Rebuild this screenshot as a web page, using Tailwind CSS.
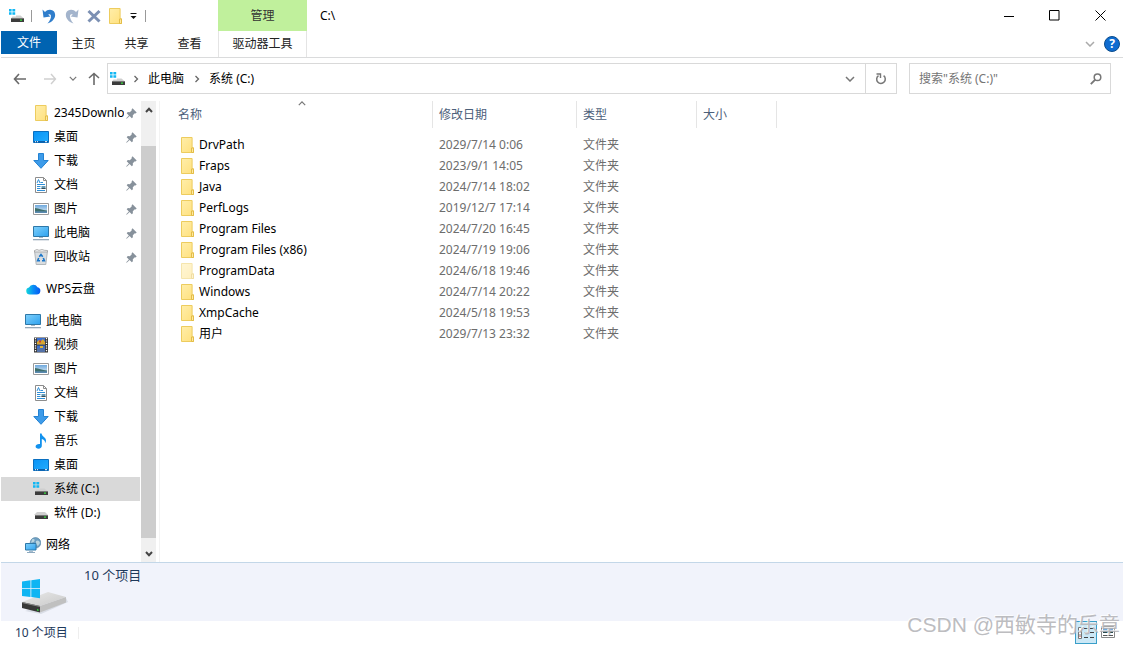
<!DOCTYPE html>
<html lang="zh-CN">
<head>
<meta charset="utf-8">
<title>C:\</title>
<script src="https://cdn.jsdelivr.net/npm/@tailwindcss/browser@4"></script>
</head>
<body class="relative flex min-h-screen flex-col bg-white px-px font-['Noto_Sans','Noto_Sans_CJK_SC',sans-serif] text-xs text-black">

<svg class="absolute size-0" aria-hidden="true">
  <defs>
    <linearGradient id="gFolder" x1="0" y1="0" x2="1" y2="1"><stop offset="0" stop-color="#ffeeaa"/><stop offset="1" stop-color="#ffe07c"/></linearGradient>
    <linearGradient id="gScreen" x1="0" y1="0" x2="1" y2="1"><stop offset="0" stop-color="#7fd0fb"/><stop offset="1" stop-color="#2ea2ef"/></linearGradient>
    <linearGradient id="gDesk" x1="0" y1="0" x2="1" y2="1"><stop offset="0" stop-color="#0a93f5"/><stop offset="1" stop-color="#22adff"/></linearGradient>
    <linearGradient id="gCloud" x1="0" y1="0" x2="1" y2="0"><stop offset="0" stop-color="#12d8dc"/><stop offset=".5" stop-color="#0a8cf5"/><stop offset="1" stop-color="#0659f2"/></linearGradient>
    <linearGradient id="gTop" x1="0" y1="0" x2="1" y2="1"><stop offset="0" stop-color="#e9e9e9"/><stop offset="1" stop-color="#c9c9c9"/></linearGradient>
    <linearGradient id="gSky" x1="0" y1="0" x2="0" y2="1"><stop offset="0" stop-color="#6fa8dc"/><stop offset="1" stop-color="#e2f0f7"/></linearGradient>
    <symbol id="folder" viewBox="0 0 13 16"><path d="M.5.5h10.600v10.300h1.400v4.700H.5z" fill="url(#gFolder)" stroke="#edcc5e"/><path d="M10.500 15.500v-4.500h2v4.500z" fill="#ffe9a0" stroke="#e3bd48"/></symbol>
    <symbol id="desktop" viewBox="0 0 16 16"><path d="M.5 2.500h15v11H.5z" fill="url(#gDesk)" stroke="#0a6fc0"/><path d="M1 12h14v1.500H1z" fill="#0b5ea8"/><path d="M2 12.700h1M4 12.700h1M12 12.700h2" stroke="#fff"/></symbol>
    <symbol id="download" viewBox="0 0 16 16"><path d="M5.500.5h5v7h4.700L8 15.300.8 7.500h4.700z" fill="#3d9be9" stroke="#2382d3"/></symbol>
    <symbol id="doc" viewBox="0 0 16 16"><path d="M2.500.5h8l3 3v12h-11z" fill="#fff" stroke="#8d8d8d"/><path d="M10.500.5v3h3" fill="none" stroke="#8d8d8d"/><path d="M4 6l1.500-3.500L7 6M7.500 5.500H10M4 7.500h8M4 9.500h3.500M4 11.500h3.500M4 13.500h8" fill="none" stroke="#2f8fd8"/><path d="M8.500 9h4v3h-4z" fill="#6499b5"/><path d="M8.500 11h4v1h-4z" fill="#3a4b53"/></symbol>
    <symbol id="picture" viewBox="0 0 16 16"><path d="M.5 2.500h15v11H.5z" fill="#fff" stroke="#9a9a9a"/><path d="M2 4h12v8H2z" fill="url(#gSky)"/><path d="M2 7c4 .5 7 2 12 2.500V12H2z" fill="#3f6f6c"/><path d="M2 10.300h12V12H2z" fill="#5a8ab0"/></symbol>
    <symbol id="pc" viewBox="0 0 16 16"><path d="M.5 1.500h15v10H.5z" fill="url(#gScreen)" stroke="#2e78a8"/><path d="M6 12h4v1H6z" fill="#a5b8c6"/><path d="M0 14h16v1.300H0z" fill="#96a9b9"/></symbol>
    <symbol id="bin" viewBox="0 0 16 16"><path d="M1.500 2h13l-1.700 13.500H3.200z" fill="#d9dde0" stroke="#a4a9ad" stroke-width=".8"/><path d="M1.500 1.500l2.500-1 2 .8L9 .5l2.500.8 3 .2v1.500h-13z" fill="#eef0f1" stroke="#999" stroke-width=".7"/><path d="M6.300 7.800L8 5.500l1.700 2.300M10.300 9l1.100 2.700H9M7 11.700H4.600L5.700 9" fill="none" stroke="#1a76c9" stroke-width="1.600"/></symbol>
    <symbol id="cloud" viewBox="0 0 16 16"><path d="M4.800 13.500a3.600 3.600 0 0 1-.8-7.100 4.800 4.800 0 0 1 8.500-.2 3.700 3.700 0 0 1-1 7.300z" fill="url(#gCloud)"/></symbol>
    <symbol id="video" viewBox="0 0 16 16"><path d="M1 .5h14v15H1z" fill="#333"/><path d="M4 1h8v6.500H4zM4 8.500h8V15H4z" fill="#3b6fd0"/><path d="M4 5l2-2 2 1 2-2 2 3v2.500H4z" fill="#d9a62e"/><path d="M6 3.500h2v2H6z" fill="#c9402f"/><path d="M4 12l3-1.500L9 12l3-2v5H4z" fill="#5472a8"/><path d="M7 9h3v2H7z" fill="#e1b638"/><path d="M2.500 1v14M13.500 1v14" stroke="#fff" stroke-width="1.300" stroke-dasharray="1.200 1.200"/></symbol>
    <symbol id="music" viewBox="0 0 16 16"><path d="M7 .5h1.600c.2 3 4.600 3.800 4.400 7.300-.1 1.200-.6 2-1 2.500.4-2.500-1.200-3.600-3.200-4.200v6.700c0 1.700-1.300 2.900-3.300 2.900-1.700 0-2.900-.8-2.900-2.200 0-1.700 2-2.800 4.400-2.400z" fill="#1292ee"/></symbol>
    <symbol id="drive" viewBox="0 0 16 16"><path d="M4 7h8l3 3H1z" fill="#cfcfcf"/><path d="M2 10h13v4H2z" fill="#3c3c3c"/><path d="M2 10h13v1H2z" fill="#777"/><path d="M11 11.500h2v1.300h-2z" fill="#36e03c"/></symbol>
    <symbol id="sysdrive" viewBox="0 0 16 16"><path d="M0 1h2.600v2.500H0zM3.400 1h2.800v2.500H3.400zM0 4.300h2.600v2.500H0zM3.400 4.300h2.800v2.500H3.400z" fill="#12b7f3"/><path d="M7 7.500h4.500l3.500 3H2L3.500 8.500h3.500z" fill="#cfcfcf"/><path d="M2 10h13v4H2z" fill="#3c3c3c"/><path d="M2 10h13v1H2z" fill="#777"/><path d="M11 11.500h2v1.300h-2z" fill="#36e03c"/></symbol>
    <symbol id="network" viewBox="0 0 16 16"><circle cx="10.500" cy="5.800" r="5.300" fill="#6d9fc3" stroke="#507f9f" stroke-width=".6"/><path d="M7 2.500c2-1 3 0 2.500 1.500S7 5 6 6zM11 4c2-1.500 3.500 0 4 2l-2 3-2-1.500z" fill="#b8d4df"/><path d="M.5 6.500h10.500v6.500H.5z" fill="url(#gScreen)" stroke="#2e78a8"/><path d="M4 14h4v.8H4zM2 15h8v1H2z" fill="#8da9bf"/></symbol>
    <symbol id="pin" viewBox="0 0 11 11"><path d="M6.500.3l4.200 4.200-1.200.9-.7-.2-2 2 .1 2-1.100 1.100-2.200-2.200L.7 10.800l-.5-.5 2.700-2.900L.7 5.200l1.100-1.100 2 .1 2-2-.2-.7z" fill="#87919b"/></symbol>
    <symbol id="chevR" viewBox="0 0 6 8"><path d="M1.500 1l3 3-3 3" fill="none" stroke="#666" stroke-width="1.300"/></symbol>
    <symbol id="chevD" viewBox="0 0 10 6"><path d="M1 1l4 4 4-4" fill="none" stroke="currentColor" stroke-width="1.500"/></symbol>
  </defs>
</svg>

<header>
  <div class="box-content flex h-[57px] items-start border-b border-[#dadbdc]">
    <div class="w-[217px]">
      <div class="flex h-[31px] items-center pl-2">
        <svg class="size-4"><use href="#sysdrive"/></svg>
        <span class="ml-1.5 h-3 w-px bg-[#999]"></span>
        <button class="ml-[9px] flex size-4" aria-label="撤消"><svg class="size-4" viewBox="0 0 16 16"><path d="M1.500 1.500l1 8 7-1-2.200-1.700C10 5 12 9 6.500 15.500 16.500 12 16 2 9 1.700 7 1.600 5.500 2.400 4 4z" fill="#2f7dcb"/></svg></button>
        <button class="ml-[7px] flex size-4" aria-label="恢复"><svg class="size-4" viewBox="0 0 16 16"><path d="M14.500 1.500l-1 8-7-1 2.200-1.700C6 5 4 9 9.500 15.500-.5 12 0 2 7 1.700c2-.1 3.500.7 5 2.300z" fill="#a3b4cc"/></svg></button>
        <button class="ml-1.5 flex size-4" aria-label="删除"><svg class="size-4" viewBox="0 0 16 16"><path d="M2.500 3l11 10.500M13.500 3l-11 10.500" stroke="#7c90b3" stroke-width="3"/></svg></button>
        <button class="ml-[7px] flex" aria-label="新建文件夹"><svg class="h-4 w-[13px]"><use href="#folder"/></svg></button>
        <button class="ml-2 flex" aria-label="自定义快速访问工具栏"><svg class="h-2 w-[7px]" viewBox="0 0 7 8"><path d="M.5 1.500h6" stroke="#111"/><path d="M.5 4h6l-3 3z" fill="#111"/></svg></button>
        <span class="ml-2 h-3 w-px bg-[#999]"></span>
      </div>
      <nav class="flex h-[23px] text-center text-[#222]">
        <button class="w-14 bg-[#0063b1] text-white">文件</button>
        <button class="w-[53px] pt-0.5">主页</button>
        <button class="w-[53px] pt-0.5">共享</button>
        <button class="w-[53px] pt-0.5">查看</button>
      </nav>
    </div>
    <div class="w-[89px]">
      <div class="flex h-[31px] items-center justify-center bg-[#c0f09c] text-[#333]">管理</div>
      <button class="block h-[26px] w-full border-x border-[#e4e4e4] pb-px text-[#222]">驱动器工具</button>
    </div>
    <h1 class="ml-[13px] flex h-8 flex-1 items-center">C:\</h1>
    <div>
      <div class="flex h-[31px]">
        <button class="flex w-[46px] items-center justify-center" aria-label="最小化"><svg class="size-2.5" viewBox="0 0 10 10"><path d="M0 5.500h10" stroke="#000"/></svg></button>
        <button class="flex w-[45px] items-center justify-center" aria-label="最大化"><svg class="size-[11px]" viewBox="0 0 11 11"><path d="M.5.5h9.500v9.500H.5z" fill="none" stroke="#000"/></svg></button>
        <button class="flex w-[46px] items-center justify-center" aria-label="关闭"><svg class="size-[11px]" viewBox="0 0 11 11"><path d="M.5.5l10 10M10.500.5l-10 10" stroke="#000"/></svg></button>
      </div>
      <div class="flex h-[26px] items-center justify-end gap-[9px] pr-[3px]">
        <button class="flex text-[#aaa]" aria-label="展开功能区"><svg class="h-1.5 w-2.5"><use href="#chevD"/></svg></button>
        <button class="flex size-4 items-center justify-center rounded-full border border-[#0b4c8c] bg-[#0f6cd0] text-xs font-bold text-white" aria-label="帮助">?</button>
      </div>
    </div>
  </div>

  <div class="flex items-center pt-[5px] pr-3">
    <div class="flex w-[106px] items-center pl-3">
      <button class="flex" aria-label="后退"><svg class="h-3 w-3.5" viewBox="0 0 14 12"><path d="M6 1L1.500 6 6 11M1.500 6H13" fill="none" stroke="#6a6a6a" stroke-width="1.600"/></svg></button>
      <button class="ml-4 flex" aria-label="前进"><svg class="h-3 w-3.5" viewBox="0 0 14 12"><path d="M8 1l4.500 5L8 11M12.500 6H1" fill="none" stroke="#cfcfcf" stroke-width="1.400"/></svg></button>
      <button class="ml-3 flex text-[#777]" aria-label="最近浏览的位置"><svg class="h-[5px] w-2" viewBox="0 0 10 6"><use href="#chevD"/></svg></button>
      <button class="ml-[11px] flex" aria-label="上移"><svg class="h-3.5 w-3" viewBox="0 0 12 14"><path d="M1 6l5-4.500L11 6M6 1.500V13" fill="none" stroke="#6a6a6a" stroke-width="1.600"/></svg></button>
    </div>
    <div class="flex h-[31px] flex-1 items-center border border-[#d9d9d9]">
      <svg class="ml-0.5 size-4"><use href="#sysdrive"/></svg>
      <svg class="ml-[7px] h-2 w-1.5"><use href="#chevR"/></svg>
      <a href="#" class="ml-[9px]">此电脑</a>
      <svg class="ml-2.5 h-2 w-1.5"><use href="#chevR"/></svg>
      <a href="#" class="ml-[9px] flex-1">系统 (C:)</a>
      <button class="mr-2.5 flex text-[#777]" aria-label="以前的位置"><svg class="h-1.5 w-2.5"><use href="#chevD"/></svg></button>
      <button class="flex h-full w-[31px] items-center justify-center border-l border-[#d9d9d9]" aria-label="刷新"><svg class="size-3" viewBox="0 0 12 12"><path d="M3.500 2.600A4.300 4.300 0 1 0 8.600 2.700" fill="none" stroke="#777" stroke-width="1.500"/><path d="M1.500 1h4v4" fill="none" stroke="#777" stroke-width="1.400"/></svg></button>
    </div>
    <label class="ml-3 flex h-[31px] w-[202px] items-center border border-[#d9d9d9] pr-2 pl-[9px]">
      <input type="search" aria-label="搜索" placeholder='搜索"系统 (C:)"' class="min-w-0 flex-1 outline-none placeholder:text-[#757575]">
      <svg class="size-3" viewBox="0 0 12 12"><circle cx="7.500" cy="4.300" r="3.300" fill="none" stroke="#777" stroke-width="1.500"/><path d="M5.200 6.700L.8 11.200" stroke="#777" stroke-width="1.900"/></svg>
    </label>
  </div>
</header>

<main class="flex flex-1 pt-[7px]">
  <nav class="w-[139px] pb-[5px]" aria-label="导航窗格">
    <ul>
      <li class="flex h-6 items-center pr-[3px] pl-[34px]"><svg class="mr-1.5 h-4 w-[13px] shrink-0"><use href="#folder"/></svg><a href="#" class="mr-0.5 min-w-0 flex-1 overflow-hidden whitespace-nowrap">2345Downloads</a><svg class="size-[11px] shrink-0"><use href="#pin"/></svg></li>
      <li class="flex h-6 items-center gap-[5px] pr-[3px] pl-8"><svg class="size-4"><use href="#desktop"/></svg><a href="#" class="flex-1">桌面</a><svg class="size-[11px]"><use href="#pin"/></svg></li>
      <li class="flex h-6 items-center gap-[5px] pr-[3px] pl-8"><svg class="size-4"><use href="#download"/></svg><a href="#" class="flex-1">下载</a><svg class="size-[11px]"><use href="#pin"/></svg></li>
      <li class="flex h-6 items-center gap-[5px] pr-[3px] pl-8"><svg class="size-4"><use href="#doc"/></svg><a href="#" class="flex-1">文档</a><svg class="size-[11px]"><use href="#pin"/></svg></li>
      <li class="flex h-6 items-center gap-[5px] pr-[3px] pl-8"><svg class="size-4"><use href="#picture"/></svg><a href="#" class="flex-1">图片</a><svg class="size-[11px]"><use href="#pin"/></svg></li>
      <li class="flex h-6 items-center gap-[5px] pr-[3px] pl-8"><svg class="size-4"><use href="#pc"/></svg><a href="#" class="flex-1">此电脑</a><svg class="size-[11px]"><use href="#pin"/></svg></li>
      <li class="flex h-6 items-center gap-[5px] pr-[3px] pl-8"><svg class="size-4"><use href="#bin"/></svg><a href="#" class="flex-1">回收站</a><svg class="size-[11px]"><use href="#pin"/></svg></li>
      <li class="mt-2 flex h-6 items-center gap-[5px] pl-6"><svg class="size-4"><use href="#cloud"/></svg><a href="#">WPS云盘</a></li>
      <li class="mt-2 flex h-6 items-center gap-[5px] pl-6"><svg class="size-4"><use href="#pc"/></svg><a href="#">此电脑</a></li>
      <li class="flex h-6 items-center gap-[5px] pl-8"><svg class="size-4"><use href="#video"/></svg><a href="#">视频</a></li>
      <li class="flex h-6 items-center gap-[5px] pl-8"><svg class="size-4"><use href="#picture"/></svg><a href="#">图片</a></li>
      <li class="flex h-6 items-center gap-[5px] pl-8"><svg class="size-4"><use href="#doc"/></svg><a href="#">文档</a></li>
      <li class="flex h-6 items-center gap-[5px] pl-8"><svg class="size-4"><use href="#download"/></svg><a href="#">下载</a></li>
      <li class="flex h-6 items-center gap-[5px] pl-8"><svg class="size-4"><use href="#music"/></svg><a href="#">音乐</a></li>
      <li class="flex h-6 items-center gap-[5px] pl-8"><svg class="size-4"><use href="#desktop"/></svg><a href="#">桌面</a></li>
      <li class="flex h-6 items-center gap-[5px] bg-[#d9d9d9] pl-8"><svg class="size-4"><use href="#sysdrive"/></svg><a href="#" aria-current="page">系统 (C:)</a></li>
      <li class="flex h-6 items-center gap-[5px] pl-8"><svg class="size-4"><use href="#drive"/></svg><a href="#">软件 (D:)</a></li>
      <li class="mt-2 flex h-6 items-center gap-[5px] pl-6"><svg class="size-4"><use href="#network"/></svg><a href="#">网络</a></li>
    </ul>
  </nav>
  <div class="ml-px flex w-[15px] flex-col bg-[#f0f0f0] text-[#444]">
    <button class="flex h-[17px] items-center justify-center" aria-label="向上滚动"><svg class="h-1.5 w-2 rotate-180" viewBox="0 0 8 6"><path d="M1 1l3 3.200L7 1" fill="none" stroke="currentColor" stroke-width="2"/></svg></button>
    <div class="mt-7 flex-1 bg-[#cdcdcd]"></div>
    <button class="mt-[7px] flex h-[17px] items-center justify-center" aria-label="向下滚动"><svg class="h-1.5 w-2" viewBox="0 0 8 6"><path d="M1 1l3 3.200L7 1" fill="none" stroke="currentColor" stroke-width="2"/></svg></button>
  </div>
  <div class="ml-[3px] flex-1 border-l border-[#f3f3f3] pl-3">
    <table class="w-[605px] table-fixed border-separate border-spacing-0 text-left text-[#6d6d6d]">
      <colgroup><col class="w-[261px]"><col class="w-36"><col class="w-30"><col class="w-20"></colgroup>
      <thead class="text-[#4c607a]">
        <tr>
          <th class="relative h-[27px] border-r border-[#e5e5e5] p-0 pl-1.5 font-normal">名称<svg class="absolute top-0 left-[126px] h-[5px] w-2 rotate-180 text-[#777]" viewBox="0 0 10 6"><use href="#chevD"/></svg></th>
          <th class="border-r border-[#e5e5e5] p-0 pl-1.5 font-normal">修改日期</th>
          <th class="border-r border-[#e5e5e5] p-0 pl-1.5 font-normal">类型</th>
          <th class="border-r border-[#e5e5e5] p-0 pl-1.5 font-normal">大小</th>
        </tr>
        <tr aria-hidden="true"><td class="h-1.5 p-0" colspan="4"></td></tr>
      </thead>
      <tbody>
        <tr><td class="h-[21px] p-0 pl-[9px] text-black"><div class="flex items-center gap-[5px]"><svg class="h-4 w-[13px]"><use href="#folder"/></svg>DrvPath</div></td><td class="p-0 pl-1.5">2029/7/14 0:06</td><td class="p-0 pl-1.5">文件夹</td><td></td></tr>
        <tr><td class="h-[21px] p-0 pl-[9px] text-black"><div class="flex items-center gap-[5px]"><svg class="h-4 w-[13px]"><use href="#folder"/></svg>Fraps</div></td><td class="p-0 pl-1.5">2023/9/1 14:05</td><td class="p-0 pl-1.5">文件夹</td><td></td></tr>
        <tr><td class="h-[21px] p-0 pl-[9px] text-black"><div class="flex items-center gap-[5px]"><svg class="h-4 w-[13px]"><use href="#folder"/></svg>Java</div></td><td class="p-0 pl-1.5">2024/7/14 18:02</td><td class="p-0 pl-1.5">文件夹</td><td></td></tr>
        <tr><td class="h-[21px] p-0 pl-[9px] text-black"><div class="flex items-center gap-[5px]"><svg class="h-4 w-[13px]"><use href="#folder"/></svg>PerfLogs</div></td><td class="p-0 pl-1.5">2019/12/7 17:14</td><td class="p-0 pl-1.5">文件夹</td><td></td></tr>
        <tr><td class="h-[21px] p-0 pl-[9px] text-black"><div class="flex items-center gap-[5px]"><svg class="h-4 w-[13px]"><use href="#folder"/></svg>Program Files</div></td><td class="p-0 pl-1.5">2024/7/20 16:45</td><td class="p-0 pl-1.5">文件夹</td><td></td></tr>
        <tr><td class="h-[21px] p-0 pl-[9px] text-black"><div class="flex items-center gap-[5px]"><svg class="h-4 w-[13px]"><use href="#folder"/></svg>Program Files (x86)</div></td><td class="p-0 pl-1.5">2024/7/19 19:06</td><td class="p-0 pl-1.5">文件夹</td><td></td></tr>
        <tr><td class="h-[21px] p-0 pl-[9px] text-black"><div class="flex items-center gap-[5px]"><svg class="h-4 w-[13px] opacity-50"><use href="#folder"/></svg>ProgramData</div></td><td class="p-0 pl-1.5">2024/6/18 19:46</td><td class="p-0 pl-1.5">文件夹</td><td></td></tr>
        <tr><td class="h-[21px] p-0 pl-[9px] text-black"><div class="flex items-center gap-[5px]"><svg class="h-4 w-[13px]"><use href="#folder"/></svg>Windows</div></td><td class="p-0 pl-1.5">2024/7/14 20:22</td><td class="p-0 pl-1.5">文件夹</td><td></td></tr>
        <tr><td class="h-[21px] p-0 pl-[9px] text-black"><div class="flex items-center gap-[5px]"><svg class="h-4 w-[13px]"><use href="#folder"/></svg>XmpCache</div></td><td class="p-0 pl-1.5">2024/5/18 19:53</td><td class="p-0 pl-1.5">文件夹</td><td></td></tr>
        <tr><td class="h-[21px] p-0 pl-[9px] text-black"><div class="flex items-center gap-[5px]"><svg class="h-4 w-[13px]"><use href="#folder"/></svg>用户</div></td><td class="p-0 pl-1.5">2029/7/13 23:32</td><td class="p-0 pl-1.5">文件夹</td><td></td></tr>
      </tbody>
    </table>
  </div>
</main>

<section class="flex h-[59px] items-start border-t border-[#c3d7e8] bg-[#f1f3fb] text-[#1e395b]" aria-label="详细信息">
  <svg class="mt-3.5 ml-5 h-10 w-12" viewBox="0 0 48 40">
    <path d="M4 34L20 37 47 25 45 21z" fill="#d9dde6"/>
    <path d="M1 25L27 15 45 20 19 29z" fill="url(#gTop)"/>
    <path d="M19 29L45 20v5.500L19 35.500z" fill="#c0c0c0"/>
    <path d="M1 25l18 4v6.500L1 31z" fill="#383838"/>
    <path d="M1 25l18 4v1L1 26z" fill="#8a8a8a"/>
    <path d="M16 32l1.500.4V34l-1.500-.4z" fill="#2fe53a"/>
    <path d="M1 4.500L9.500 3.300v8H1zM10.300 3.200L19 2v9.300h-8.700zM1 12h8.500v8L1 18.900zM10.300 12H19v9.300l-8.700-1.200z" fill="#0fb5f3"/>
  </svg>
  <p class="mt-1 ml-[15px] text-[13px]">10 个项目</p>
</section>

<footer class="flex h-6 items-center text-[#1e395b]">
  <p class="ml-3.5">10 个项目</p>
  <span class="ml-2.5 h-3 w-px bg-[#eee]"></span>
  <div class="ml-auto flex h-full items-start pr-1">
    <button class="flex h-[23px] w-[22px] items-center justify-center border border-[#3a9fc9] bg-[#cbe8f6]" aria-label="详细信息"><svg class="h-3 w-4" viewBox="0 0 16 12"><path d="M.5.5h3v11h-3zM.5 4h3M.5 8h3" fill="#fff" stroke="#777"/><path d="M6 1.500h4M12 1.500h4M6 5.500h4M12 5.500h4M6 10.500h4M12 10.500h4" stroke="#444"/><path d="M1.500 9.500h1" stroke="#c33" /></svg></button>
    <button class="flex h-[21px] w-[22px] items-center justify-center" aria-label="大图标"><svg class="h-3 w-3.5" viewBox="0 0 14 12"><path d="M.5.500h13v11H.5z" fill="#fff" stroke="#888"/><path d="M2 2h4.500v5H2zM7.500 2H12v5H7.500z" fill="#4a8fd0"/><path d="M2 5h4.500v2H2zM7.500 5H12v2H7.500z" fill="#284a50"/><path d="M2 9.500h4.500M7.500 9.500H12" stroke="#555"/></svg></button>
  </div>
</footer>

<div class="pointer-events-none absolute right-1 bottom-1 font-['Liberation_Sans','Noto_Sans_CJK_SC',sans-serif] text-[21px] leading-8 whitespace-nowrap text-[#b4b4b8]/90 [text-shadow:-1px_-1px_0_#ffffffcc]">CSDN @西敏寺的乐章</div>
</body>
</html>
